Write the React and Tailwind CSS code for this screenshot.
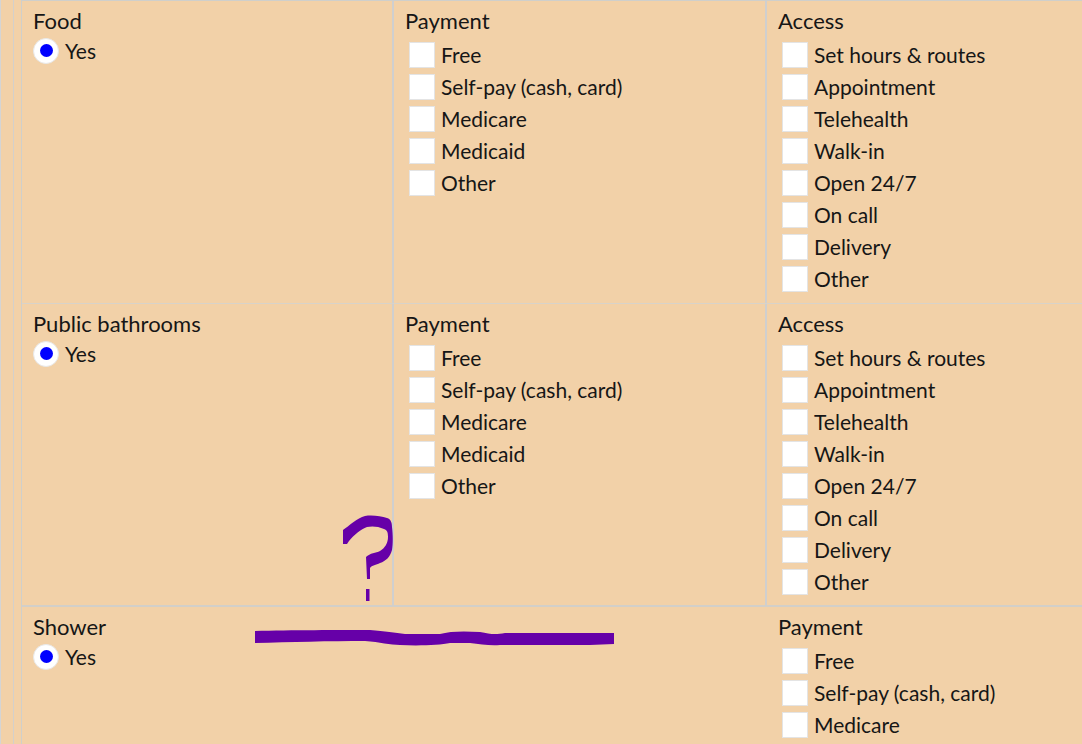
const PAYMENT = ['Free', 'Self-pay (cash, card)', 'Medicare', 'Medicaid', 'Other'];
const ACCESS = ['Set hours & routes', 'Appointment', 'Telehealth', 'Walk-in', 'Open 24/7', 'On call', 'Delivery', 'Other'];

function CheckGroup({ title, items }) {
  return (
    <div className="pl-[11px] pt-[7px]">
      <div className="h-[26px] text-[22px] leading-[26px]">{title}</div>
      <div className="mt-[5px] flex flex-col">
        {items.map((label) => (
          <label key={label} className="flex h-[32px] items-center pl-[4px]">
            <span className="h-[26px] w-[26px] border border-[#e4e4e4] bg-white" />
            <span className="ml-[6px]">{label}</span>
          </label>
        ))}
      </div>
    </div>
  );
}

function YesCell({ title, span }) {
  return (
    <div className={`pl-[11px] pt-[7px] ${span ? 'col-span-2' : 'border-r-2 border-[#cfcfcf]'}`}>
      <div className="h-[26px] text-[22px] leading-[26px]">{title}</div>
      <div className="mt-[1px] flex items-center">
        <span className="flex h-[26px] w-[26px] items-center justify-center rounded-full border border-[#e8e8e8] bg-white">
          <span className="h-[13px] w-[13px] rounded-full bg-[#0000ff]" />
        </span>
        <span className="ml-[6px]">Yes</span>
      </div>
    </div>
  );
}

function Row({ title, children, height, border, span }) {
  return (
    <div className={`grid grid-cols-[372px_373px_1fr] ${border} ${height}`}>
      <YesCell title={title} span={span} />
      {children}
    </div>
  );
}

export default function App() {
  return (
    <div className="relative h-[744px] w-[1082px] overflow-hidden bg-[#f2d1a8] font-['Lato','Noto_Sans',sans-serif] text-[21px] text-[#161616]">
      <div className="h-full border-l border-[#d4d4d4]">
        <div className="ml-[12px] h-full border-l border-[#d3d0cb]">
          <div className="ml-[7px] h-full border-l border-t border-[#cfcfcb]">
            <Row title="Food" height="h-[303px]" border="border-b border-[#d8d3ca]">
              <div className="border-r-2 border-[#cfcfcf]"><CheckGroup title="Payment" items={PAYMENT} /></div>
              <CheckGroup title="Access" items={ACCESS} />
            </Row>
            <Row title="Public bathrooms" height="h-[303px]" border="border-b-2 border-[#d2cfc9]">
              <div className="border-r-2 border-[#cfcfcf]"><CheckGroup title="Payment" items={PAYMENT} /></div>
              <CheckGroup title="Access" items={ACCESS} />
            </Row>
            <Row title="Shower" span height="h-[200px]" border="">
              <CheckGroup title="Payment" items={PAYMENT.slice(0, 3)} />
            </Row>
          </div>
        </div>
      </div>
      {/* hand-drawn annotation over the form */}
      <svg className="absolute left-0 top-0" width="1082" height="744" fill="#6600a8">
        <path d="M343 530 C349 526 357 518 365 516 C372 515 381 516 387 518 C391 519 392 523 392 527 C393 535 393 544 392 550 C390 557 386 561 380 563 C376 565 372 565 370 568 L370 579 L367 579 L366 557 C370 553 376 553 380 551 C385 548 388 543 388 537 C388 532 387 530 384 529 C378 526 371 526 367 527 C361 529 354 535 349 541 L347 544 L343 544 Z" />
        <path d="M366 589 h3.5 v12 h-3.5 Z" />
        <path d="M255 631 C290 630 340 630 370 630 C385 631 395 633 405 634 L440 634 C450 631 465 631 480 632 C490 634 495 635 505 633 L612 633 L614 633 L614 644 L590 645 L500 645 C490 646 480 644 470 643 L450 643 C440 645 420 646 400 645 C390 645 380 642 365 641 C330 641 290 642 255 643 Z" />
      </svg>
    </div>
  );
}
